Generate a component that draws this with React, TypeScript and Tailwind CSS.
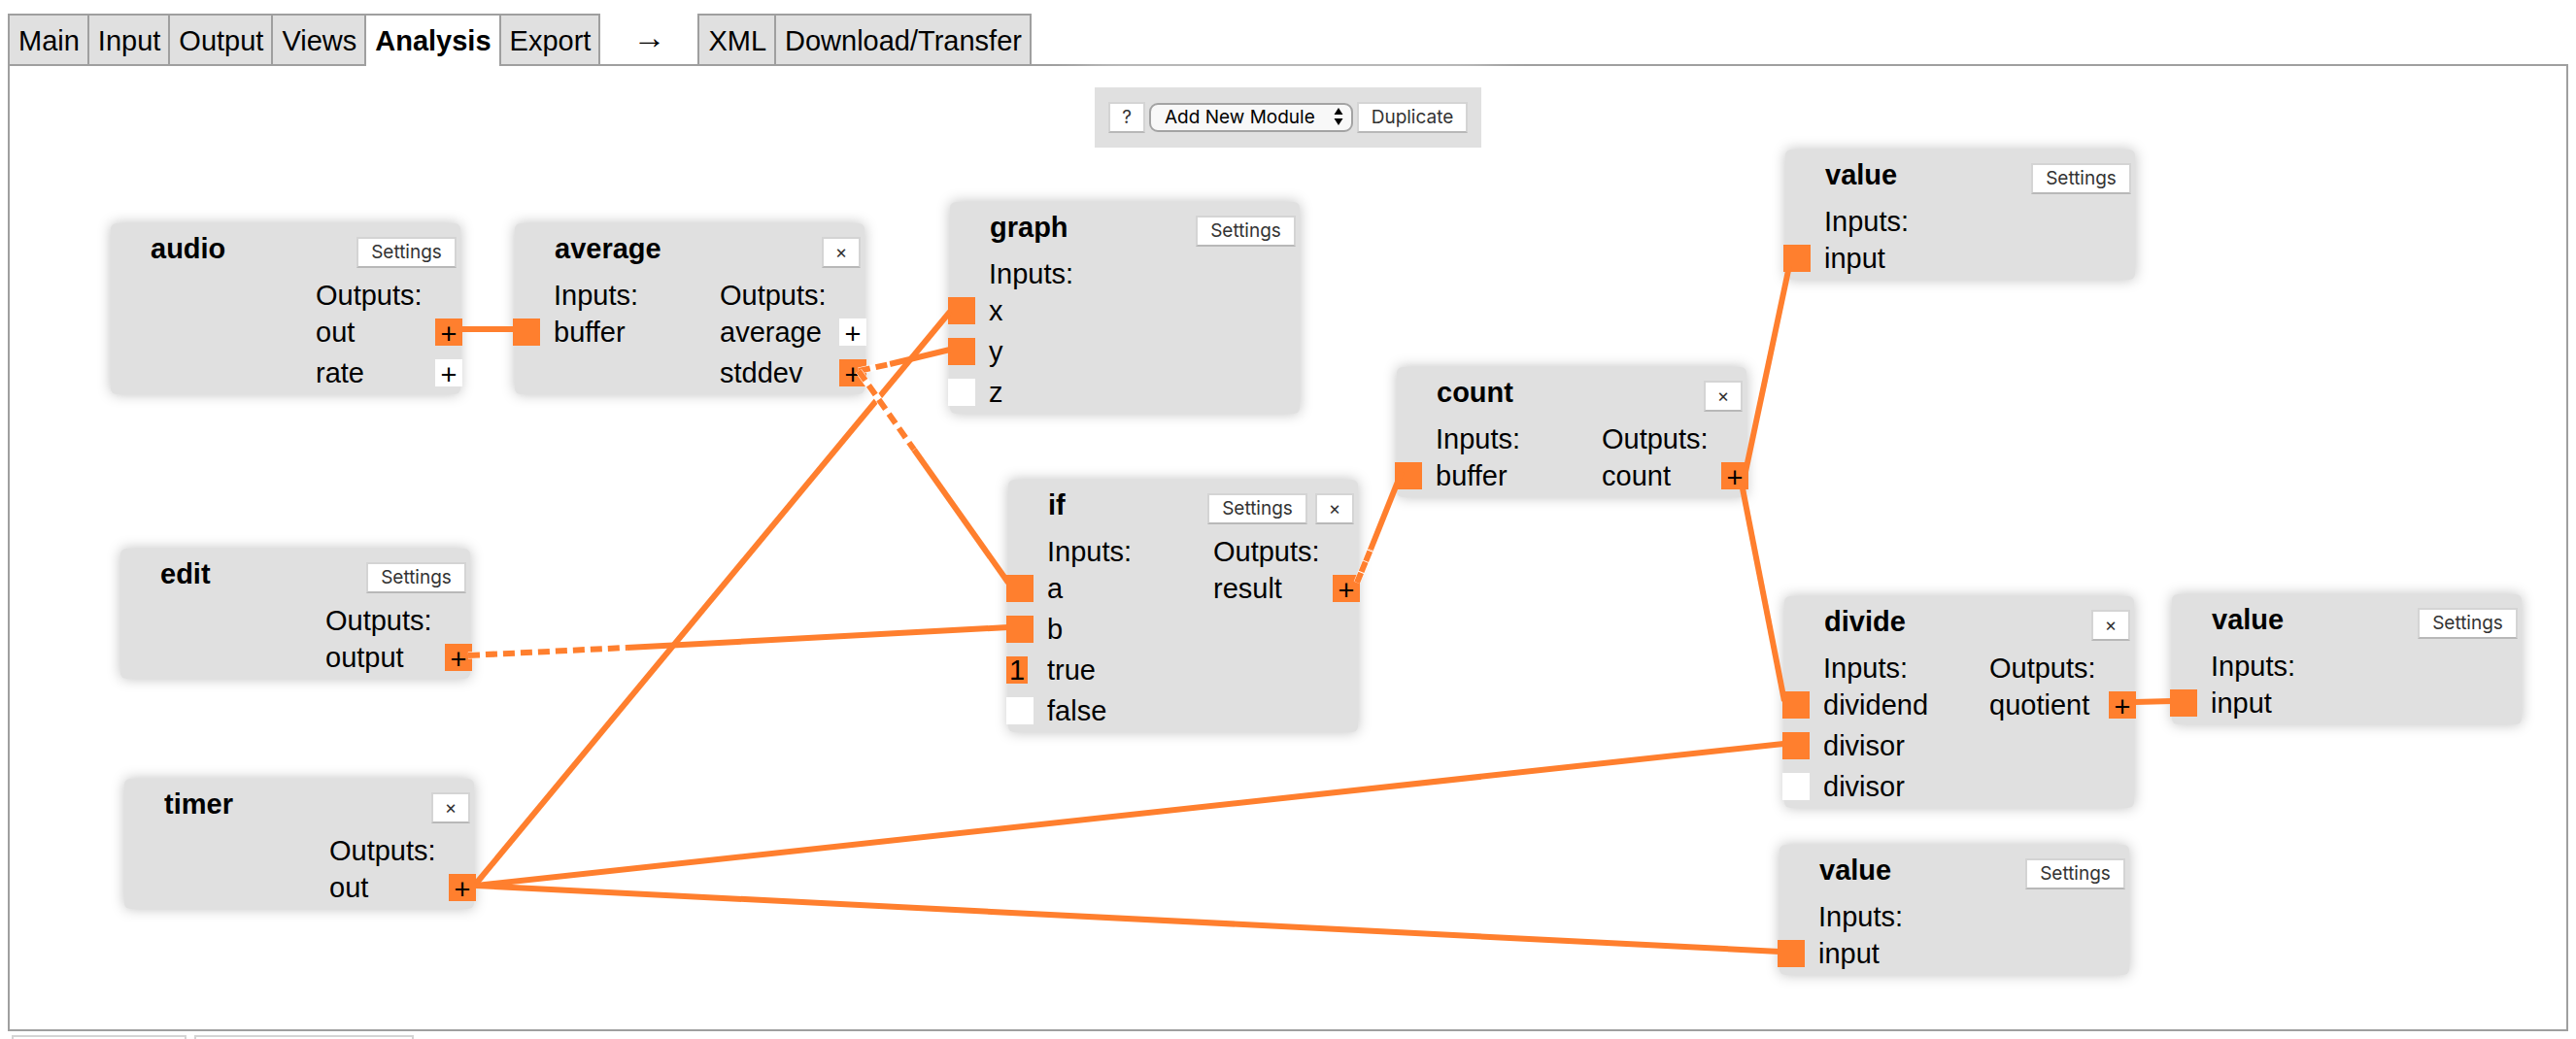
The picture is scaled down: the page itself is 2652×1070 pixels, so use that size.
import React from "react";

type Port = { name: string; state: "linked" | "free" | "constant" };
type Module = {
  title: string;
  left: number;
  top: number;
  settings?: boolean;
  removable?: boolean;
  inputs?: Port[];
  outputs?: Port[];
};
type Wire = {
  from: [number, number];
  to: [number, number];
  dashedTo?: [number, number];
  dash?: string;
};

const linked = (name: string): Port => ({ name, state: "linked" });
const free = (name: string): Port => ({ name, state: "free" });

const modules: Module[] = [
  { title: "audio", left: 104, top: 162, settings: true, outputs: [linked("out"), free("rate")] },
  {
    title: "average",
    left: 520,
    top: 162,
    removable: true,
    inputs: [linked("buffer")],
    outputs: [free("average"), linked("stddev")],
  },
  { title: "graph", left: 968, top: 140, settings: true, inputs: [linked("x"), linked("y"), free("z")] },
  {
    title: "if",
    left: 1028,
    top: 426,
    settings: true,
    removable: true,
    inputs: [linked("a"), linked("b"), { name: "true", state: "constant" }, free("false")],
    outputs: [linked("result")],
  },
  { title: "count", left: 1428, top: 310, removable: true, inputs: [linked("buffer")], outputs: [linked("count")] },
  { title: "value", left: 1828, top: 86, settings: true, inputs: [linked("input")] },
  {
    title: "divide",
    left: 1827,
    top: 546,
    removable: true,
    inputs: [linked("dividend"), linked("divisor"), free("divisor")],
    outputs: [linked("quotient")],
  },
  { title: "value", left: 2226, top: 544, settings: true, inputs: [linked("input")] },
  { title: "value", left: 1822, top: 802, settings: true, inputs: [linked("input")] },
  { title: "edit", left: 114, top: 497, settings: true, outputs: [linked("output")] },
  { title: "timer", left: 118, top: 734, removable: true, outputs: [linked("out")] },
];

const wires: Wire[] = [
  { from: [466, 271], to: [520, 271] },
  { from: [480, 842], to: [968, 253] },
  { from: [480, 844], to: [1826, 698] },
  { from: [480, 844], to: [1822, 912] },
  { from: [874, 314], to: [968, 292], dashedTo: [906, 307], dash: "12 6" },
  { from: [874, 314], to: [1028, 532], dashedTo: [931, 395], dash: "12 6" },
  { from: [472, 607], to: [1028, 578], dashedTo: [635, 599], dash: "12 6" },
  { from: [1387, 532], to: [1433, 418], dashedTo: [1401, 498], dash: "11 1" },
  { from: [1787, 418], to: [1832, 206] },
  { from: [1783, 430], to: [1827, 654] },
  { from: [2188, 655], to: [2226, 654] },
];

const smallButton =
  "flex h-8 items-center justify-center border-2 border-[#d4d4d4] border-b-[#b8b8b8] bg-white font-['Inter',sans-serif] text-[19px] leading-6 text-[#333]";

function Tab({ label, active, last }: { label: string; active?: boolean; last?: boolean }) {
  return (
    <button
      type="button"
      aria-current={active ? "page" : undefined}
      className={
        "border-t-2 border-l-2 border-[#9f9f9f] pt-[10px] pr-2 pl-[9px] " +
        (active ? "relative z-10 -mb-[2px] bg-white pb-[10px] font-bold " : "bg-[#e0e0e0] pb-2 ") +
        (last ? "border-r-2" : "")
      }
    >
      {label}
    </button>
  );
}

function InputPort({ port }: { port: Port }) {
  return (
    <li className="flex h-8 items-center">
      <span className="mr-[14px] flex w-7">
        {port.state === "constant" ? (
          <span className="h-7 w-[22px] bg-[#ff7f2e] text-center leading-7">1</span>
        ) : (
          <span className={port.state === "linked" ? "h-7 w-7 bg-[#ff7f2e]" : "h-7 w-7 bg-white"} />
        )}
      </span>
      {port.name}
    </li>
  );
}

function OutputPort({ port }: { port: Port }) {
  return (
    <li className="flex h-8 items-center justify-between">
      {port.name}
      <button
        type="button"
        aria-label={`Connect ${port.name}`}
        className={
          "flex h-7 w-7 items-center justify-center pt-1 text-[29px] leading-6 " +
          (port.state === "linked" ? "bg-[#ff7f2e]" : "bg-white")
        }
      >
        +
      </button>
    </li>
  );
}

function ModuleCard({ module }: { module: Module }) {
  return (
    <section
      className="absolute w-[360px] rounded-md bg-[#e0e0e0] pb-[6px] shadow-[0_0_14px_rgba(0,0,0,0.25)]"
      style={{ left: module.left, top: module.top }}
    >
      <header className="flex h-[58px] items-start justify-between pr-1 pl-[41px]">
        <h2 className="pt-[10px] font-bold">{module.title}</h2>
        <div className="flex gap-2 pt-[14px]">
          {module.settings && (
            <button type="button" className={`${smallButton} w-[103px]`}>
              Settings
            </button>
          )}
          {module.removable && (
            <button type="button" aria-label="Remove" className={`${smallButton} w-10`}>
              ×
            </button>
          )}
        </div>
      </header>
      <div className="-mx-[2px] flex">
        <div className="w-[213px]">
          {module.inputs && (
            <>
              <h3 className="mb-[6px] pl-[42px]">Inputs:</h3>
              <ul className="flex flex-col gap-[10px]">
                {module.inputs.map((port, i) => (
                  <InputPort key={i} port={port} />
                ))}
              </ul>
            </>
          )}
        </div>
        <div className="flex-1">
          {module.outputs && (
            <>
              <h3 className="mb-[6px]">Outputs:</h3>
              <ul className="flex flex-col gap-[10px]">
                {module.outputs.map((port, i) => (
                  <OutputPort key={i} port={port} />
                ))}
              </ul>
            </>
          )}
        </div>
      </div>
    </section>
  );
}

function WireLine({ wire }: { wire: Wire }) {
  const [x1, y1] = wire.from;
  const [x2, y2] = wire.to;
  if (!wire.dashedTo) {
    return <line x1={x1} y1={y1} x2={x2} y2={y2} stroke="#ff7f2e" strokeWidth="6" />;
  }
  const [mx, my] = wire.dashedTo;
  return (
    <g>
      <line x1={mx} y1={my} x2={x2} y2={y2} stroke="#ff7f2e" strokeWidth="6" />
      <line x1={x1} y1={y1} x2={mx} y2={my} stroke="#fff" strokeWidth="7" />
      <line x1={x1} y1={y1} x2={mx} y2={my} stroke="#ff7f2e" strokeWidth="6" strokeDasharray={wire.dash} />
    </g>
  );
}

export default function App() {
  return (
    <div className="overflow-hidden bg-white px-2 pt-[14px] font-['Liberation_Sans',Arial,sans-serif] text-[29px] leading-8 text-black">
      <nav className="flex items-start">
        <Tab label="Main" />
        <Tab label="Input" />
        <Tab label="Output" />
        <Tab label="Views" />
        <Tab label="Analysis" active />
        <Tab label="Export" last />
        <span className="w-[100px] pt-2 text-center text-[34px]">→</span>
        <Tab label="XML" />
        <Tab label="Download/Transfer" last />
      </nav>

      <main className="relative h-[996px] border-2 border-[#9f9f9f]">
        <div className="flex justify-center pt-[22px]">
          <div className="flex h-[62px] items-center gap-1 bg-[#e0e0e0] px-[14px] shadow-[0_0_40px_10px_white]">
            <button type="button" className={`${smallButton} w-[38px]`}>
              ?
            </button>
            <div className="relative flex">
              <select
                aria-label="Add New Module"
                className="h-[30px] w-[210px] appearance-none rounded-[9px] border-2 border-[#a3a3a3] bg-[#f8f8f8] pl-[14px] font-['Inter',sans-serif] text-[19px] leading-6 text-black"
              >
                <option>Add New Module</option>
              </select>
              <svg
                className="pointer-events-none absolute top-[5px] right-[10px] h-[18px] w-[10px]"
                viewBox="0 0 10 18"
                aria-hidden="true"
              >
                <path d="M5 0 9.5 7H.5ZM5 18 .5 11h9Z" />
              </svg>
            </div>
            <button type="button" className={`${smallButton} w-[114px]`}>
              Duplicate
            </button>
          </div>
        </div>

        {modules.map((module, i) => (
          <ModuleCard key={i} module={module} />
        ))}

        <svg className="pointer-events-none absolute inset-0 h-full w-full" aria-hidden="true">
          {wires.map((wire, i) => (
            <WireLine key={i} wire={wire} />
          ))}
        </svg>
      </main>

      <footer className="flex h-2 gap-2 overflow-hidden px-1 pt-1">
        <button type="button" aria-label="Save" className={`${smallButton} w-[180px] shrink-0`} />
        <button type="button" aria-label="Restore" className={`${smallButton} w-[226px] shrink-0`} />
      </footer>
    </div>
  );
}
